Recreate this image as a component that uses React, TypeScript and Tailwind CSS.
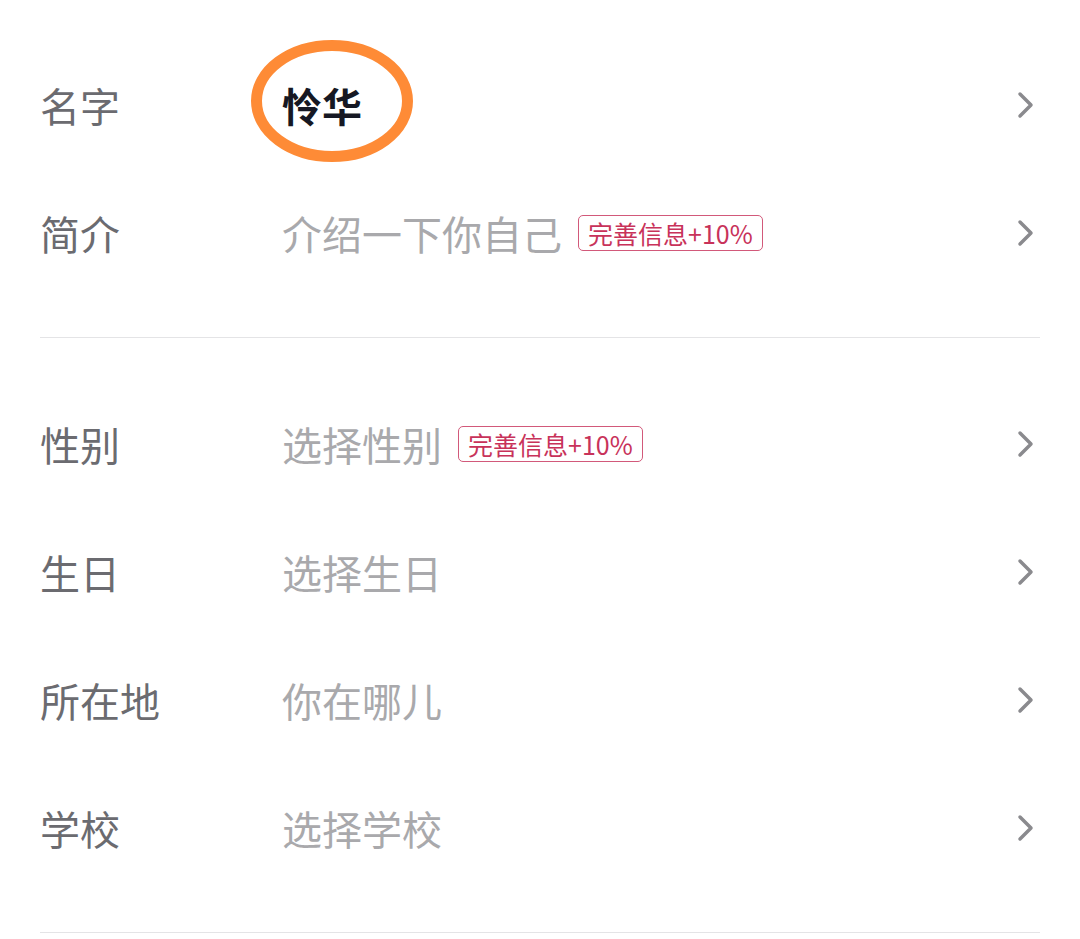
import { ReactNode } from 'react';

const font = { fontFamily: '"Noto Sans CJK SC", "Noto Sans", sans-serif' };

const Chevron = () => (
  <svg width="24" height="28" viewBox="0 0 24 28" className="shrink-0">
    <path d="M4 3 L15 14 L4 25" fill="none" stroke="#8a8a8e" strokeWidth="3.5" strokeLinecap="round" strokeLinejoin="round" />
  </svg>
);

const Badge = () => (
  <span className="ml-[16px] h-[36px] px-[9px] flex items-center rounded-[5px] border-[1.5px] border-[#d2597a] text-[25px] text-[#c8325a] leading-none">
    完善信息+10%
  </span>
);

type RowProps = { label: string; children: ReactNode };

const Row = ({ label, children }: RowProps) => (
  <div className="h-[128px] flex items-center">
    <div className="w-[242px] shrink-0 text-[40px] text-[#6b6b70]">{label}</div>
    <div className="flex-1 flex items-center">{children}</div>
    <Chevron />
  </div>
);

const Placeholder = ({ text }: { text: string }) => (
  <span className="text-[40px] text-[#a9a9ac]">{text}</span>
);

export default function App() {
  return (
    <div className="w-[1080px] h-[939px] bg-white overflow-hidden" style={font}>
      <div className="px-10 pt-[41px]">
        <Row label="名字">
          <span className="relative text-[40px] font-bold text-[#161823]">
            怜华
            <svg
              className="absolute left-[-33px] top-[calc(50%-4px)] -translate-y-1/2"
              width="168"
              height="130"
              viewBox="0 0 168 130"
            >
              <ellipse cx="83" cy="65" rx="75.5" ry="55.5" fill="none" stroke="#fe8b36" strokeWidth="11" />
            </svg>
          </span>
        </Row>
        <Row label="简介">
          <Placeholder text="介绍一下你自己" />
          <Badge />
        </Row>
        <div className="h-px bg-[#e4e4e6] mt-[40px] mb-[42px]" />
        <Row label="性别">
          <Placeholder text="选择性别" />
          <Badge />
        </Row>
        <Row label="生日">
          <Placeholder text="选择生日" />
        </Row>
        <Row label="所在地">
          <Placeholder text="你在哪儿" />
        </Row>
        <Row label="学校">
          <Placeholder text="选择学校" />
        </Row>
        <div className="h-px bg-[#e4e4e6] mt-[40px]" />
      </div>
    </div>
  );
}
